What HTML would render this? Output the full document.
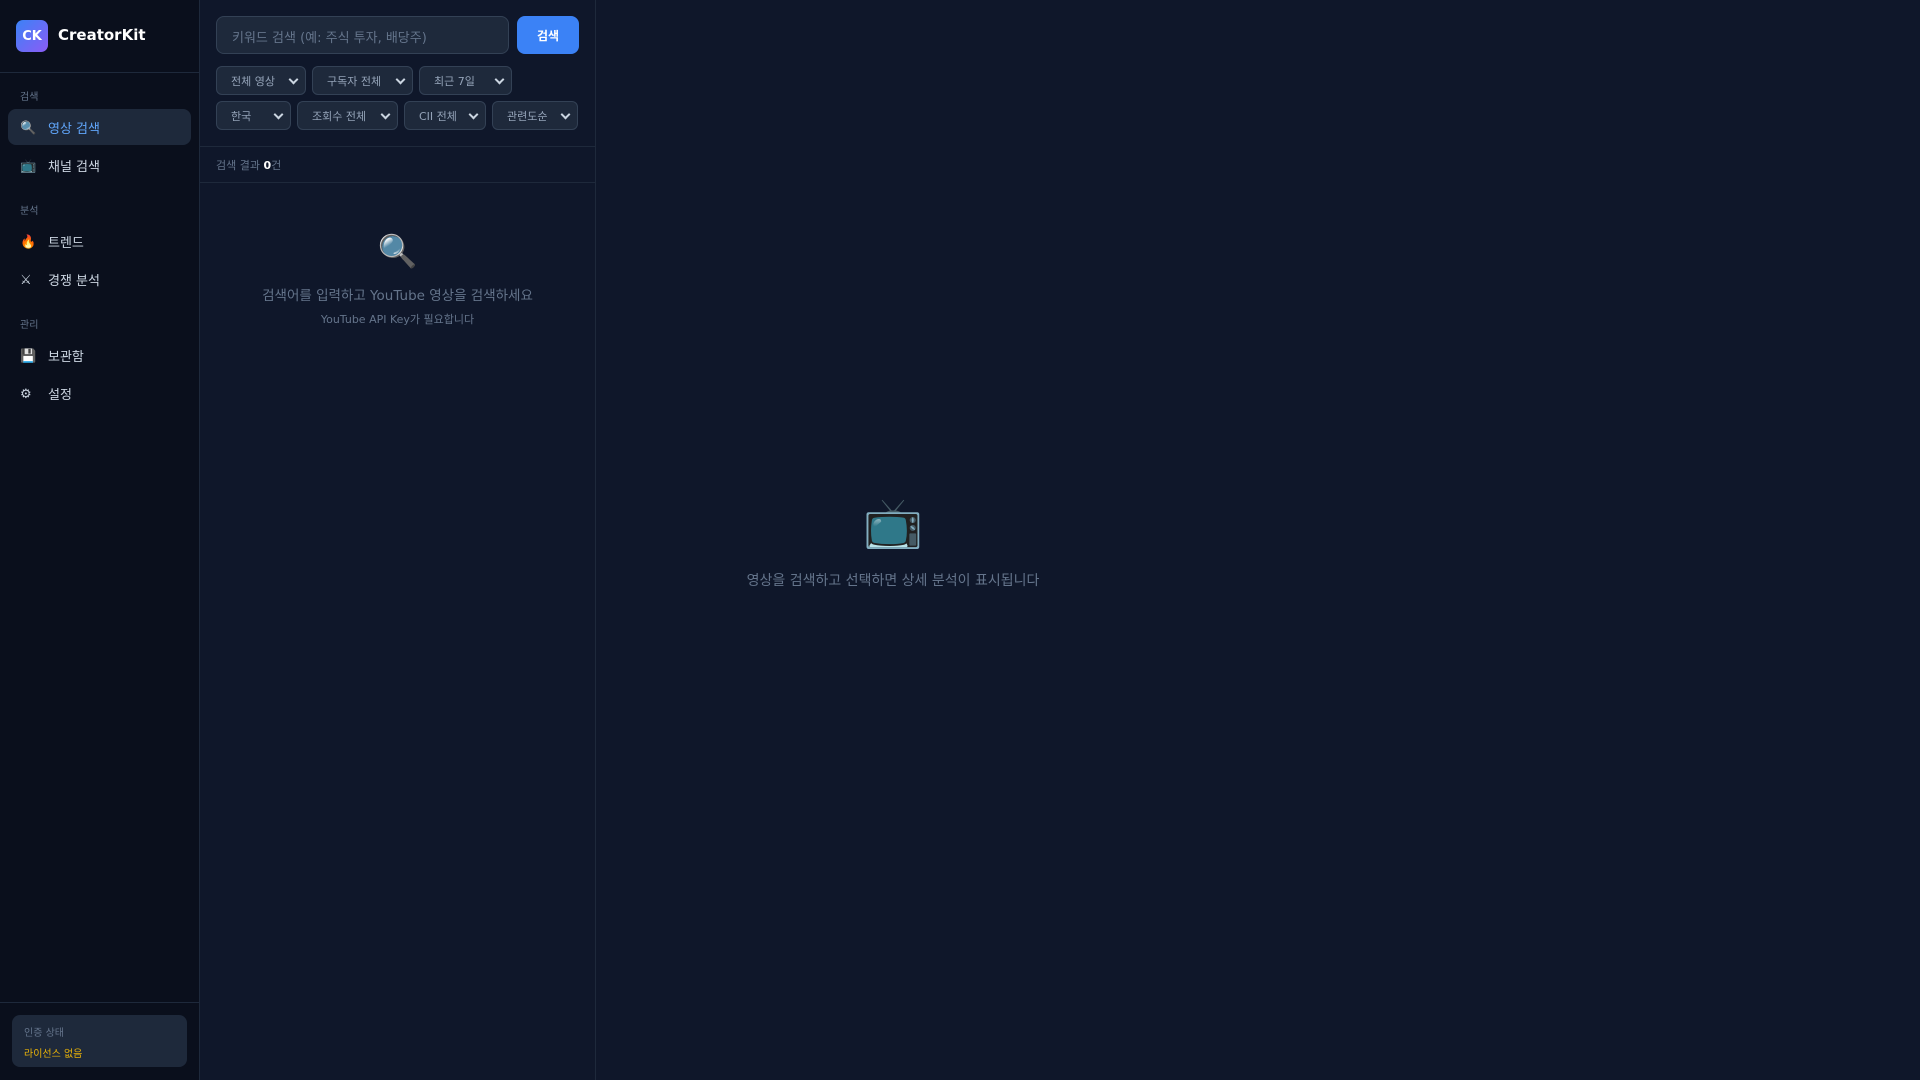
<!DOCTYPE html>
<html><head><meta charset="utf-8"><style>
*{box-sizing:border-box;margin:0;padding:0}
body{width:1920px;height:1080px;overflow:hidden;background:#0f172a;font-family:"DejaVu Sans","Noto Sans CJK KR",sans-serif;color:#e2e8f0;position:relative}
.sb{position:absolute;left:0;top:0;width:200px;height:1080px;background:#0a0f1c;border-right:1px solid #1e293b}
.logo{position:absolute;left:16px;top:20px;width:32px;height:32px;border-radius:7px;background:linear-gradient(135deg,#3b82f6,#8b5cf6);color:#fff;font-weight:bold;font-size:13px;display:flex;align-items:center;justify-content:center}
.brand{position:absolute;left:58px;top:26px;font-size:15px;font-weight:bold;color:#fff}
.hl{position:absolute;left:0;width:199px;height:1px;background:#1e293b}
.sec{position:absolute;left:20px;font-size:10px;color:#64748b}
.it{position:absolute;left:8px;width:183px;height:36px;border-radius:8px;font-size:13px;color:#cbd5e1;display:flex;align-items:center;padding-left:12px}
.it span.i{width:28px;font-size:13px;padding-top:2px}
.it.a{background:#1e293b;color:#60a5fa}
.mid{position:absolute;left:200px;top:0;width:396px;height:1080px;border-right:1px solid #1e293b}
.inp{position:absolute;left:16px;top:16px;width:293px;height:38px;background:#1e293b;border:1px solid #334155;border-radius:8px;font-size:13px;color:#64748b;padding:10px 15px}
.btn{position:absolute;left:317px;top:16px;width:62px;height:38px;background:#3b82f6;border-radius:8px;color:#fff;font-weight:bold;font-size:12px;display:flex;align-items:center;justify-content:center}
.sel{position:absolute;height:29px;background:#1e293b;border:1px solid #334155;border-radius:6px;font-size:11px;color:#94a3b8;padding:6px 14px}
.sel:after{content:"";position:absolute;right:8px;top:9px;width:5px;height:5px;border-right:2px solid #cbd5e1;border-bottom:2px solid #cbd5e1;transform:rotate(45deg)}
.c{position:absolute;text-align:center;left:0;right:0}
</style></head><body>
<div class="sb">
<div class="logo">CK</div><div class="brand">CreatorKit</div>
<div class="hl" style="top:72px"></div>
<div class="sec" style="top:88px">검색</div>
<div class="it a" style="top:109px"><span class="i">🔍</span>영상 검색</div>
<div class="it" style="top:147px"><span class="i">📺</span>채널 검색</div>
<div class="sec" style="top:202px">분석</div>
<div class="it" style="top:223px"><span class="i">🔥</span>트렌드</div>
<div class="it" style="top:261px"><span class="i">⚔</span>경쟁 분석</div>
<div class="sec" style="top:316px">관리</div>
<div class="it" style="top:337px"><span class="i">💾</span>보관함</div>
<div class="it" style="top:375px"><span class="i">⚙</span>설정</div>
<div class="hl" style="top:1002px"></div>
<div style="position:absolute;left:12px;top:1015px;width:175px;height:52px;background:#1e293b;border-radius:8px;padding:9px 12px">
<div style="font-size:10px;color:#64748b">인증 상태</div>
<div style="font-size:10px;color:#eab308;margin-top:6px">라이선스 없음</div></div>
</div>
<div class="mid">
<div class="inp">키워드 검색 (예: 주식 투자, 배당주)</div>
<div class="btn">검색</div>
<div class="sel" style="left:16px;top:66px;width:90px">전체 영상</div>
<div class="sel" style="left:112px;top:66px;width:101px">구독자 전체</div>
<div class="sel" style="left:219px;top:66px;width:93px">최근 7일</div>
<div class="sel" style="left:16px;top:101px;width:75px">한국</div>
<div class="sel" style="left:97px;top:101px;width:101px">조회수 전체</div>
<div class="sel" style="left:204px;top:101px;width:82px">CII 전체</div>
<div class="sel" style="left:292px;top:101px;width:86px">관련도순</div>
<div style="position:absolute;left:0;top:146px;width:395px;height:1px;background:#1e293b"></div>
<div style="position:absolute;left:16px;top:157px;font-size:11px;color:#64748b">검색 결과 <b style="color:#fff">0</b>건</div>
<div style="position:absolute;left:0;top:182px;width:395px;height:1px;background:#1e293b"></div>
<div class="c" style="top:232px;font-size:32px">🔍</div>
<div class="c" style="top:284px;font-size:13.5px;color:#64748b">검색어를 입력하고 YouTube 영상을 검색하세요</div>
<div class="c" style="top:311px;font-size:11px;color:#64748b">YouTube API Key가 필요합니다</div>
</div>
<div style="position:absolute;left:596px;width:594px;top:0">
<div class="c" style="top:494px;font-size:48px">📺</div>
<div class="c" style="top:570px;font-size:14px;color:#64748b">영상을 검색하고 선택하면 상세 분석이 표시됩니다</div>
</div>
</body></html>
